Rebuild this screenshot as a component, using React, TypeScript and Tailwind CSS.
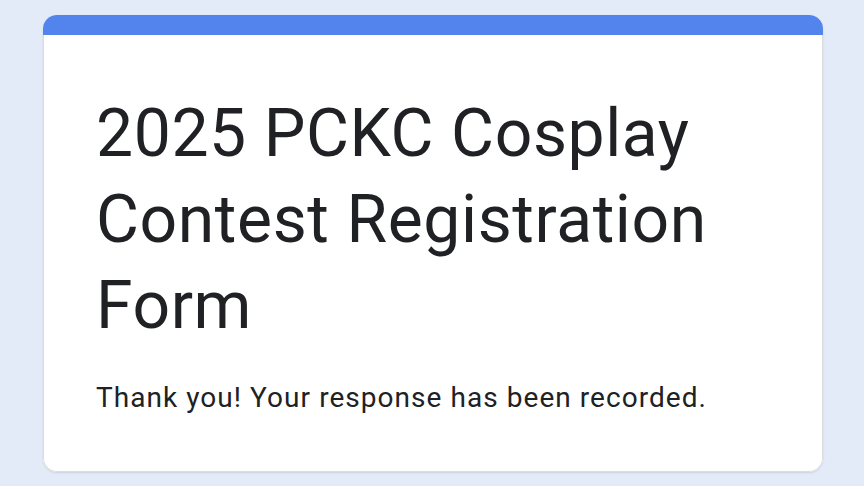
export default function App() {
  return (
    <div
      className="min-h-[486px] w-full bg-[#e4ebf8] px-[43px] pt-[15px]"
      style={{ fontFamily: "Roboto, 'Noto Sans', sans-serif" }}
    >
      <div className="w-[780px] overflow-hidden rounded-[14px] bg-white shadow-[0_1px_2px_rgba(60,64,67,0.15)]">
        <div className="h-5 bg-[#5383ec]" />
        <div className="rounded-b-[14px] border-x border-b border-[#dadce0] px-[52px] pb-[55px] pt-[56px] text-[#202124]">
          <h1 className="text-[66px] leading-[86px] font-normal tracking-[0.6px]">
            2025 PCKC Cosplay Contest Registration Form
          </h1>
          <p className="mt-[31px] text-[28px] leading-[36px] tracking-[1.05px]">
            Thank you! Your response has been recorded.
          </p>
        </div>
      </div>
    </div>
  );
}
